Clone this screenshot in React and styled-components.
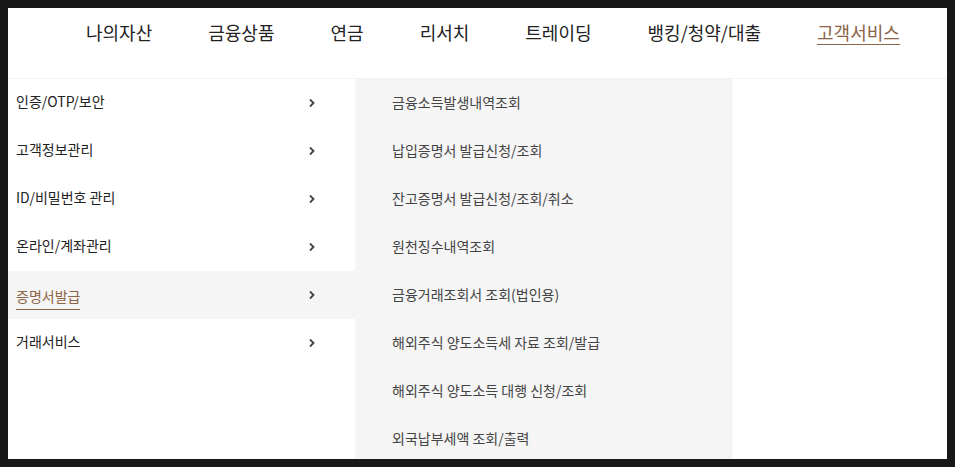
import React from "react";
import styled, { createGlobalStyle } from "styled-components";

const Global = createGlobalStyle`
  html, body { margin: 0; padding: 0; }
  body {
    background: #181818;
    padding: 8px;
    font-family: "Noto Sans CJK KR", "Noto Sans", sans-serif;
  }
`;

const Page = styled.div`
  background: #fff;
  height: 451px;
  display: flex;
  flex-direction: column;
  overflow: hidden;
`;

const Header = styled.nav`
  height: 71px;
  flex: none;
  display: flex;
  align-items: flex-start;
  padding: 12px 0 0 78px;
  gap: 56px;
  border-bottom: 1px solid #f3f3f3;
  box-sizing: border-box;
`;

const NavItem = styled.a`
  font-size: 18px;
  line-height: 24px;
  color: ${(p) => (p.$active ? "#8b6446" : "#222")};
  text-decoration: none;
  border-bottom: 1px solid ${(p) => (p.$active ? "#8b6446" : "transparent")};
`;

const Body = styled.div`
  flex: 1;
  display: flex;
`;

const LeftCol = styled.ul`
  list-style: none;
  margin: 0;
  padding: 0;
  width: 347px;
  flex: none;
`;

const LeftRow = styled.li`
  height: 48px;
  display: flex;
  align-items: center;
  justify-content: space-between;
  padding: 0 39px 0 8px;
  background: ${(p) => (p.$active ? "#f5f5f5" : "#fff")};
`;

const LeftLabel = styled.span`
  font-size: 14px;
  line-height: 20px;
  color: ${(p) => (p.$active ? "#8b6446" : "#222")};
  border-bottom: 1px solid ${(p) => (p.$active ? "#8b6446" : "transparent")};
  padding-bottom: 3px;
  margin-top: ${(p) => (p.$active ? "5px" : "0")};
`;

const MidCol = styled.ul`
  list-style: none;
  margin: 0;
  padding: 0;
  width: 376px;
  flex: none;
  background: #f5f5f5;
  border-right: 1px solid #eeeeee;
`;

const MidRow = styled.li`
  height: 48px;
  display: flex;
  align-items: center;
  padding-left: 37px;
  font-size: 14px;
  color: #444;
  margin-top: ${(p) => (p.$first ? "-1px" : "0")};
`;

const RightCol = styled.div`
  flex: 1;
  background: #fff;
`;

const Chevron = () => (
  <svg width="8" height="10" viewBox="0 0 8 10">
    <path d="M2 1.5 L5.5 5 L2 8.5" fill="none" stroke="#444" strokeWidth="1.8" />
  </svg>
);

const nav = ["나의자산", "금융상품", "연금", "리서치", "트레이딩", "뱅킹/청약/대출", "고객서비스"];
const left = ["인증/OTP/보안", "고객정보관리", "ID/비밀번호 관리", "온라인/계좌관리", "증명서발급", "거래서비스"];
const mid = [
  "금융소득발생내역조회",
  "납입증명서 발급신청/조회",
  "잔고증명서 발급신청/조회/취소",
  "원천징수내역조회",
  "금융거래조회서 조회(법인용)",
  "해외주식 양도소득세 자료 조회/발급",
  "해외주식 양도소득 대행 신청/조회",
  "외국납부세액 조회/출력",
];

export default function App() {
  return (
    <>
      <Global />
      <Page>
        <Header>
          {nav.map((n) => (
            <NavItem key={n} $active={n === "고객서비스"}>{n}</NavItem>
          ))}
        </Header>
        <Body>
          <LeftCol>
            {left.map((l) => (
              <LeftRow key={l} $active={l === "증명서발급"}>
                <LeftLabel $active={l === "증명서발급"}>{l}</LeftLabel>
                <Chevron />
              </LeftRow>
            ))}
          </LeftCol>
          <MidCol>
            {mid.map((m, i) => (
              <MidRow key={m} $first={i === 0}>{m}</MidRow>
            ))}
          </MidCol>
          <RightCol />
        </Body>
      </Page>
    </>
  );
}
